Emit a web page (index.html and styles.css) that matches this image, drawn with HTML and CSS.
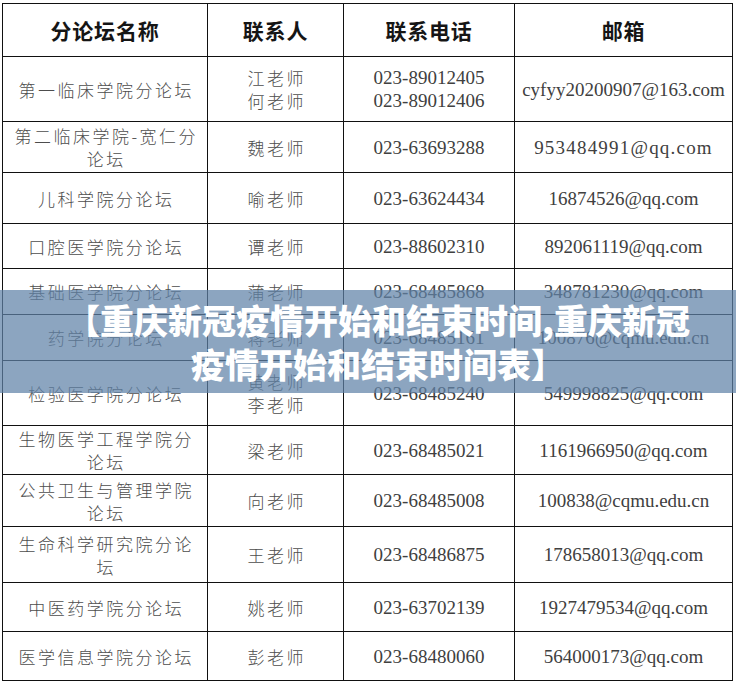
FILE: index.html
```html
<!DOCTYPE html>
<html lang="zh-CN">
<head>
<meta charset="utf-8">
<title>重庆新冠疫情开始和结束时间表</title>
<link rel="stylesheet" href="styles.css">
</head>
<body>
<div class="page">
  <table class="forum-table">
    <colgroup>
      <col class="c1"><col class="c2"><col class="c3"><col class="c4">
    </colgroup>
    <thead>
      <tr class="h53"><th>分论坛名称</th><th>联系人</th><th>联系电话</th><th>邮箱</th></tr>
    </thead>
    <tbody>
      <tr class="h65"><td class="cjk">第一临床学院分论坛</td><td class="cjk">江老师<br>何老师</td><td class="num">023-89012405<br>023-89012406</td><td class="num">cyfyy20200907@163.com</td></tr>
      <tr class="h51"><td class="cjk">第二临床学院-宽仁分<br>论坛</td><td class="cjk">魏老师</td><td class="num">023-63693288</td><td class="num wide">953484991@qq.com</td></tr>
      <tr class="h51"><td class="cjk">儿科学院分论坛</td><td class="cjk">喻老师</td><td class="num">023-63624434</td><td class="num">16874526@qq.com</td></tr>
      <tr class="h45"><td class="cjk">口腔医学院分论坛</td><td class="cjk">谭老师</td><td class="num">023-88602310</td><td class="num">892061119@qq.com</td></tr>
      <tr class="h46"><td class="cjk">基础医学院分论坛</td><td class="cjk">蒲老师</td><td class="num">023-68485868</td><td class="num">348781230@qq.com</td></tr>
      <tr class="h46"><td class="cjk">药学院分论坛</td><td class="cjk">蒋老师</td><td class="num">023-68485161</td><td class="num">100876@cqmu.edu.cn</td></tr>
      <tr class="h65"><td class="cjk">检验医学院分论坛</td><td class="cjk">黄老师<br>李老师</td><td class="num">023-68485240</td><td class="num">549998825@qq.com</td></tr>
      <tr class="h49"><td class="cjk">生物医学工程学院分<br>论坛</td><td class="cjk">梁老师</td><td class="num">023-68485021</td><td class="num">1161966950@qq.com</td></tr>
      <tr class="h52"><td class="cjk">公共卫生与管理学院<br>论坛</td><td class="cjk">向老师</td><td class="num">023-68485008</td><td class="num">100838@cqmu.edu.cn</td></tr>
      <tr class="h56"><td class="cjk">生命科学研究院分论<br>坛</td><td class="cjk">王老师</td><td class="num">023-68486875</td><td class="num">178658013@qq.com</td></tr>
      <tr class="h49"><td class="cjk">中医药学院分论坛</td><td class="cjk">姚老师</td><td class="num">023-63702139</td><td class="num">1927479534@qq.com</td></tr>
      <tr class="h49"><td class="cjk">医学信息学院分论坛</td><td class="cjk">彭老师</td><td class="num">023-68480060</td><td class="num">564000173@qq.com</td></tr>
    </tbody>
  </table>
  <div class="banner">
    <p class="banner-title">【重庆新冠疫情开始和结束时间,重庆新冠<br>疫情开始和结束时间表】</p>
  </div>
</div>
</body>
</html>
```
FILE: styles.css
```css
html, body {
  margin: 0;
  padding: 0;
  background: #ffffff;
}

.page {
  position: relative;
  width: 736px;
  height: 684px;
  padding: 3px 0 0 2px;
  box-sizing: border-box;
  overflow: hidden;
}

.forum-table {
  border-collapse: collapse;
  table-layout: fixed;
  width: 730px;
}

.c1 { width: 205px; }
.c2 { width: 136px; }
.c3 { width: 171px; }
.c4 { width: 218px; }

.forum-table th,
.forum-table td {
  border: 1px solid #111111;
  padding: 0;
  text-align: center;
  vertical-align: middle;
}

.forum-table th {
  font-family: "Noto Sans CJK SC", sans-serif;
  font-weight: 700;
  font-size: 21px;
  letter-spacing: 0.8px;
  color: #151515;
  line-height: 26px;
}

.forum-table td.cjk {
  font-family: "Noto Sans CJK SC", sans-serif;
  font-weight: 300;
  font-size: 17px;
  letter-spacing: 2.5px;
  padding-left: 2.5px;
  line-height: 23px;
  color: #4d4d4d;
}

.forum-table td.num {
  font-family: "Liberation Serif", serif;
  font-size: 19px;
  line-height: 23px;
  color: #404040;
}

.forum-table td.wide {
  letter-spacing: 1.2px;
}

.h53 { height: 53px; }
.h65 { height: 65px; }
.h51 { height: 51px; }
.h45 { height: 45px; }
.h46 { height: 46px; }
.h49 { height: 49px; }
.h52 { height: 52px; }
.h56 { height: 56px; }

.banner {
  position: absolute;
  left: 0;
  top: 290px;
  width: 736px;
  height: 103px;
  background: rgba(96, 130, 167, 0.72);
  display: flex;
  align-items: center;
  justify-content: center;
}

.banner-title {
  margin: 0;
  padding-left: 20px;
  font-family: "Noto Sans CJK SC", sans-serif;
  font-weight: 900;
  font-size: 34px;
  line-height: 44px;
  color: #ffffff;
  text-align: center;
}
```
